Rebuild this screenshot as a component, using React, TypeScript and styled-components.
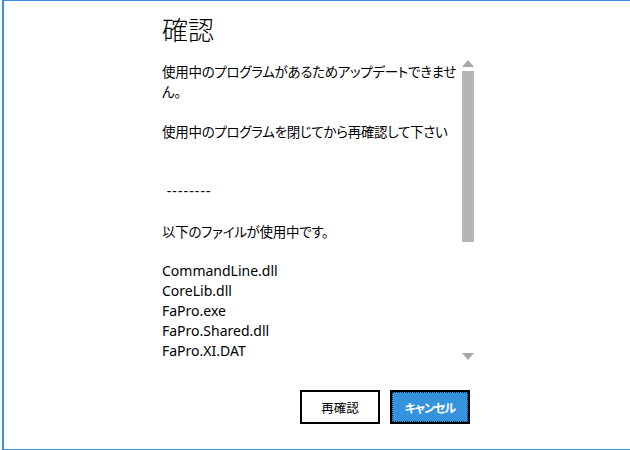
import React from "react";
import styled, { createGlobalStyle } from "styled-components";

const GlobalStyle = createGlobalStyle`
  html, body {
    margin: 0;
    padding: 0;
    width: 630px;
    height: 450px;
    overflow: hidden;
    background: #ffffff;
  }
  * { box-sizing: border-box; }
`;

const ACCENT = "#3a90dc";
const CJK = `"Noto Sans CJK JP", sans-serif`;
const LATIN = `"Noto Sans", "Noto Sans CJK JP", sans-serif`;

const Window = styled.div`
  margin-left: 2px;
  width: 628px;
  height: 450px;
  border-top: 1px solid ${ACCENT};
  border-left: 2px solid ${ACCENT};
  border-bottom: 1px solid ${ACCENT};
  background: #ffffff;
  display: flex;
  padding-left: 158px;
`;

const Dialog = styled.div`
  width: 312px;
  display: flex;
  flex-direction: column;
  color: #000000;
`;

const Title = styled.h1`
  margin: 11px 0 0 0;
  font-family: ${CJK};
  font-size: 26px;
  line-height: 34px;
  font-weight: 300;
`;

const Body = styled.div`
  margin-top: 14px;
  height: 300px;
  display: flex;
`;

const Content = styled.div`
  flex: 1;
  overflow: hidden;
  padding-top: 1px;
  display: flex;
  flex-direction: column;
  gap: 20px;
  line-height: 20px;
`;

const Paragraph = styled.p`
  margin: 0;
  font-family: ${CJK};
  font-feature-settings: "palt";
  font-size: 13.5px;
  letter-spacing: -0.3px;
  white-space: pre;
`;

const Separator = styled.div`
  margin-top: 20px;
  font-family: ${LATIN};
  font-size: 14px;
  letter-spacing: 1.1px;
  white-space: pre;
`;

const FileList = styled.ul`
  margin: 0;
  padding: 0;
  list-style: none;
  font-family: ${LATIN};
  font-size: 14px;
`;

const FileItem = styled.li`
  height: 20px;
  white-space: nowrap;
`;

const ScrollBar = styled.div`
  width: 12px;
  display: flex;
  flex-direction: column;
  align-items: center;
`;

const Arrow = styled.div<{ $dir: "up" | "down" }>`
  width: 0;
  height: 0;
  border-left: 6px solid transparent;
  border-right: 6px solid transparent;
  ${(p) =>
    p.$dir === "up"
      ? `border-bottom: 7px solid #a6a6a6;`
      : `border-top: 7px solid #a6a6a6;`}
`;

const Track = styled.div`
  flex: 1;
  width: 12px;
  padding: 4px 0 1px 0;
  display: flex;
  flex-direction: column;
`;

const Thumb = styled.div`
  width: 12px;
  background: #b5b5b5;
`;

const Buttons = styled.div`
  margin-top: 30px;
  padding-right: 4px;
  display: flex;
  justify-content: flex-end;
  gap: 10px;
`;

const Button = styled.button<{ $primary?: boolean }>`
  width: 80px;
  height: 34px;
  border: 2px solid #000000;
  border-radius: 0;
  padding: 0;
  font-family: ${CJK};
  font-feature-settings: "palt";
  font-size: ${(p) => (p.$primary ? "12px" : "12.5px")};
  letter-spacing: ${(p) => (p.$primary ? "-1px" : "0")};
  background: ${(p) => (p.$primary ? "#3592dd" : "#ffffff")};
  color: ${(p) => (p.$primary ? "#ffffff" : "#000000")};
  font-weight: ${(p) => (p.$primary ? 700 : 400)};
  outline: ${(p) => (p.$primary ? "1px dotted #1a2a44" : "none")};
  outline-offset: -3px;
  cursor: pointer;
`;

const files = [
  "CommandLine.dll",
  "CoreLib.dll",
  "FaPro.exe",
  "FaPro.Shared.dll",
  "FaPro.XI.DAT",
];

export default function App() {
  const thumbHeight = 171;
  return (
    <>
      <GlobalStyle />
      <Window>
        <Dialog>
          <Title>確認</Title>
          <Body>
            <Content>
              <Paragraph>{"使用中のプログラムがあるためアップデートできませ\nん。"}</Paragraph>
              <Paragraph>使用中のプログラムを閉じてから再確認して下さい</Paragraph>
              <Separator>{" --------"}</Separator>
              <Paragraph>以下のファイルが使用中です。</Paragraph>
              <FileList>
                {files.map((f) => (
                  <FileItem key={f}>{f}</FileItem>
                ))}
              </FileList>
            </Content>
            <ScrollBar>
              <Arrow $dir="up" />
              <Track>
                <Thumb style={{ height: thumbHeight }} />
              </Track>
              <Arrow $dir="down" />
            </ScrollBar>
          </Body>
          <Buttons>
            <Button>再確認</Button>
            <Button $primary>キャンセル</Button>
          </Buttons>
        </Dialog>
      </Window>
    </>
  );
}
